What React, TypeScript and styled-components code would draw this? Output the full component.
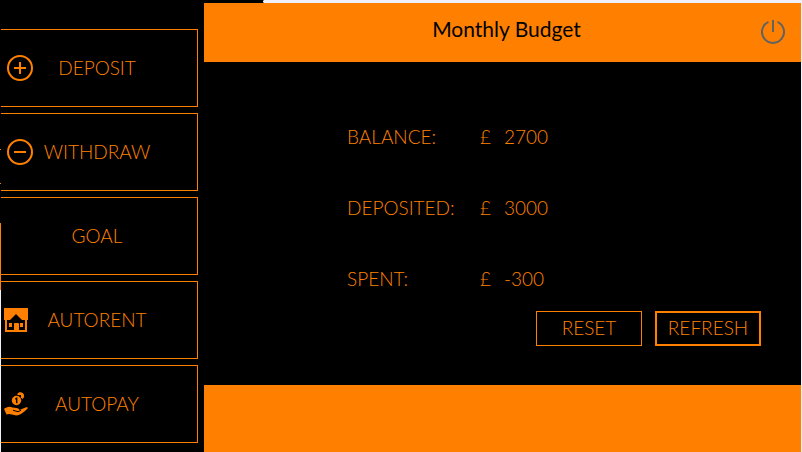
import React from "react";
import styled, { createGlobalStyle } from "styled-components";

const orange = "#ff8000";
const black = "#000000";
const pale = "#f0f0f8";

const GlobalStyle = createGlobalStyle`
  * { box-sizing: border-box; }
  body {
    margin: 0;
    background: ${black};
    color: ${orange};
    font-family: "Century Gothic", Lato, sans-serif;
    font-size: 19px;
    font-weight: 300;
    line-height: 24px;
  }
  button { font: inherit; color: inherit; cursor: pointer; }
`;

const Window = styled.div`
  display: grid;
  grid-template-columns: 1px 203px 1fr 1px;
  min-height: 100vh;
  background: ${black};
`;

const LeftEdge = styled.div`
  background: linear-gradient(
    ${black} 149px, ${orange} 149px 150px,
    ${black} 150px 183px, ${orange} 183px 184px,
    ${black} 184px 223px, ${orange} 223px 290px,
    ${pale} 290px
  );
`;

const RightEdge = styled.div`
  background: ${pale};
`;

const Sidebar = styled.nav`
  display: flex;
  flex-direction: column;
  gap: 6px;
  padding: 29px 6px 9px 0;
`;

const MenuButton = styled.button`
  display: grid;
  grid-template-columns: 36px 1fr 40px;
  align-items: center;
  height: 78px;
  padding: 0;
  background: ${black};
  border: 1px solid ${orange};
  border-left: 0;
`;

const MenuIcon = styled.span<{ $inset: number }>`
  display: flex;
  padding-left: ${(p) => p.$inset}px;
`;

const MenuLabel = styled.span`
  text-align: center;
  white-space: nowrap;
`;

const Main = styled.main`
  display: flex;
  flex-direction: column;
`;

const TopStrip = styled.div`
  height: 3px;
  margin-left: 59px;
  background: ${pale};
  border-left: 1px dotted #808080;
`;

const Header = styled.header`
  display: grid;
  grid-template-columns: 64px 1fr 56px;
  padding: 14px 0 18px;
  background: ${orange};
  color: ${black};
`;

const Title = styled.h1`
  grid-column: 2;
  margin: 0;
  font-size: 21px;
  line-height: 24px;
  font-weight: 400;
  text-align: center;
`;

const PowerButton = styled.button`
  justify-self: center;
  display: flex;
  height: 27px;
  padding: 3px 0 0;
  border: 0;
  background: none;
`;

const Content = styled.section`
  padding: 63px 40px 39px 143px;
`;

const Stats = styled.dl`
  display: grid;
  grid-template-columns: 133px 1fr;
  row-gap: 47px;
  margin: 0;
`;

const StatLabel = styled.dt`
  white-space: nowrap;
`;

const StatValue = styled.dd`
  display: grid;
  grid-template-columns: 24px 1fr;
  margin: 0;
`;

const Actions = styled.div`
  display: flex;
  justify-content: flex-end;
  gap: 13px;
  margin-top: 20px;
`;

const ActionButton = styled.button<{ $focused?: boolean }>`
  width: 106px;
  height: 35px;
  padding: 0 0 2px;
  background: ${black};
  border: ${(p) => (p.$focused ? 2 : 1)}px solid ${orange};
`;

const Footer = styled.footer`
  flex: 1;
  min-height: 67px;
  background: ${orange};
`;

const PlusIcon = () => (
  <svg width="26" height="26" viewBox="0 0 26 26" fill="none" stroke={orange} strokeWidth="2" aria-hidden="true">
    <circle cx="13" cy="13" r="12" />
    <path d="M7 13h12M13 7v12" />
  </svg>
);

const MinusIcon = () => (
  <svg width="26" height="26" viewBox="0 0 26 26" fill="none" stroke={orange} strokeWidth="2" aria-hidden="true">
    <circle cx="13" cy="13" r="12" />
    <path d="M7 13h12" />
  </svg>
);

const HouseIcon = () => (
  <svg width="24" height="24" viewBox="0 0 24 24" aria-hidden="true">
    <path fill={orange} d="M0 0h24v12H0zM1 12h22v12H1z" />
    <path fill={black} d="M12 6l6 6h3v10h-6v-6q0-1-1-1h-3q-1 0-1 1v6H3V12h3z" />
    <path fill={orange} d="M5 15h3v4H5zM16 15h3v4h-3zM10 16q0-1 1-1h2q1 0 1 1v6h-4z" />
  </svg>
);

const HandCoinsIcon = () => (
  <svg width="24" height="24" viewBox="0 0 24 24" aria-hidden="true">
    <path fill={orange} d="M13 2.500A3.700 3.700 0 1 1 18.500 7L17 5.800V3l-1.800.3z" />
    <circle cx="12.500" cy="8.500" r="4.700" fill={orange} />
    <path fill="none" stroke={black} strokeWidth="1.400" d="M11.300 7.200l1.400-.9v5" />
    <path
      fill={orange}
      d="M0 16.800L2.500 15.500Q5.500 13.800 8.500 15.500L12.500 16Q15.500 16.300 15.500 18L21.500 15.400Q24 14.800 24 16Q21 19.500 17 22Q13 24.500 8 22.600Q5 21.400 2.500 22.500z"
    />
    <path fill="none" stroke={black} strokeWidth="1" d="M9 18.300l5 1.400 3-1.500" />
  </svg>
);

const PowerIcon = () => (
  <svg width="24" height="24" viewBox="0 0 24 24" fill="none" stroke="#626262" strokeWidth="2" aria-hidden="true">
    <path d="M7.500 1.900A11 11 0 1 0 16.500 1.900M12 0v12" />
  </svg>
);

const menu = [
  { label: "DEPOSIT", icon: <PlusIcon />, inset: 6 },
  { label: "WITHDRAW", icon: <MinusIcon />, inset: 6 },
  { label: "GOAL", icon: null, inset: 0 },
  { label: "AUTORENT", icon: <HouseIcon />, inset: 3 },
  { label: "AUTOPAY", icon: <HandCoinsIcon />, inset: 3 },
];

const stats = [
  { label: "BALANCE:", value: "2700" },
  { label: "DEPOSITED:", value: "3000" },
  { label: "SPENT:", value: "-300" },
];

export default function App() {
  return (
    <>
      <GlobalStyle />
      <Window>
        <LeftEdge />
        <Sidebar>
          {menu.map((item) => (
            <MenuButton key={item.label} type="button">
              <MenuIcon $inset={item.inset}>{item.icon}</MenuIcon>
              <MenuLabel>{item.label}</MenuLabel>
            </MenuButton>
          ))}
        </Sidebar>
        <Main>
          <TopStrip />
          <Header>
            <Title>Monthly Budget</Title>
            <PowerButton type="button" aria-label="Exit">
              <PowerIcon />
            </PowerButton>
          </Header>
          <Content>
            <Stats>
              {stats.map((stat) => (
                <React.Fragment key={stat.label}>
                  <StatLabel>{stat.label}</StatLabel>
                  <StatValue>
                    <span>£</span>
                    <span>{stat.value}</span>
                  </StatValue>
                </React.Fragment>
              ))}
            </Stats>
            <Actions>
              <ActionButton type="button">RESET</ActionButton>
              <ActionButton type="button" $focused>
                REFRESH
              </ActionButton>
            </Actions>
          </Content>
          <Footer />
        </Main>
        <RightEdge />
      </Window>
    </>
  );
}
